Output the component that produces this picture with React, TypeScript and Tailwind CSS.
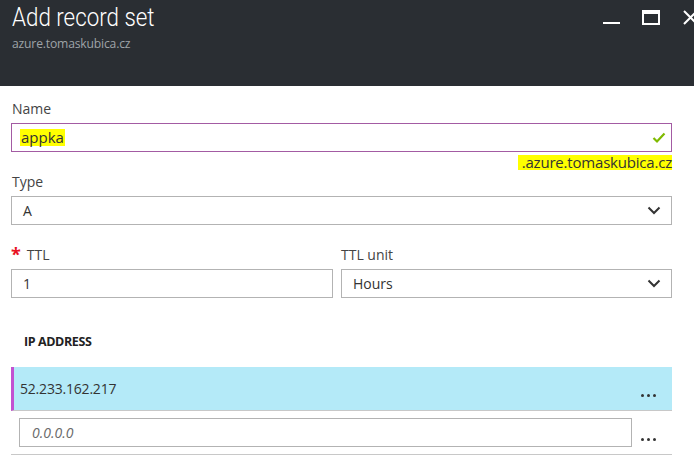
import React from 'react'

const Chevron = () => (
    <svg width="14" height="9" viewBox="0 0 14 9" className="shrink-0">
        <path d="M1.5 1.5 L7 7 L12.5 1.5" fill="none" stroke="#333" strokeWidth="2" />
    </svg>
)

const Dots = () => (
    <div className="flex gap-[3px] items-center">
        <span className="w-[3px] h-[3px] rounded-full bg-[#333]" />
        <span className="w-[3px] h-[3px] rounded-full bg-[#333]" />
        <span className="w-[3px] h-[3px] rounded-full bg-[#333]" />
    </div>
)

export default function App() {
    return (
        <div className="w-[694px] h-[472px] overflow-hidden bg-white font-['Open_Sans','Noto_Sans',sans-serif] text-[#333]">
            <header className="h-[86px] bg-[#2a2e33] flex justify-between pl-3">
                <div>
                    <h1 className="block mt-[2px] origin-left scale-x-[0.86] font-['Roboto',sans-serif] text-[26px] leading-[31px] font-light text-white whitespace-nowrap">Add record set</h1>
                    <p className="mt-[2px] origin-left scale-x-[0.9] text-[13.5px] leading-[16px] text-[#9ea3a8] tracking-[-0.2px] whitespace-nowrap">azure.tomaskubica.cz</p>
                </div>
                <div className="flex items-start gap-[22px] pt-[10px] -mr-[6px]">
                    <svg width="17" height="15" viewBox="0 0 17 15">
                        <rect x="0" y="12" width="17" height="2" fill="#fff" />
                    </svg>
                    <svg width="18" height="15" viewBox="0 0 18 15">
                        <rect x="1" y="1" width="16" height="13" fill="none" stroke="#fff" strokeWidth="2" />
                        <rect x="1" y="1" width="16" height="3" fill="#fff" />
                    </svg>
                    <svg width="18" height="15" viewBox="0 0 18 15">
                        <path d="M2 1 L15 14 M15 1 L2 14" stroke="#fff" strokeWidth="2" />
                    </svg>
                </div>
            </header>

            <main className="pl-[11px] pr-[22px]">
                <label className="block mt-[13px] text-[14px] leading-[20px] text-[#444] pl-[1px]">Name</label>
                <div className="mt-[4px] h-[29px] border border-[#a35ba3] flex items-center justify-between pl-[8px] pr-[5px]">
                    <span className="bg-[#ffff00] text-[15px] leading-[17px] px-[1px] text-[#333]">appka</span>
                    <svg width="14" height="12" viewBox="0 0 14 12">
                        <path d="M1.5 6 L5 9.5 L12.5 1.5" fill="none" stroke="#7fba00" strokeWidth="2.2" />
                    </svg>
                </div>
                <div className="flex justify-end mt-[3px]">
                    <span className="bg-[#ffff00] text-[15px] leading-[15px] h-[15px] pl-[4px] text-[#333] tracking-[-0.2px]">.azure.tomaskubica.cz</span>
                </div>

                <label className="block mt-[2px] text-[14px] leading-[20px] text-[#444] pl-[1px]">Type</label>
                <div className="mt-[4px] h-[29px] border border-[#b3b3b3] flex items-center justify-between pl-[11px] pr-[10px]">
                    <span className="text-[14px]">A</span>
                    <Chevron />
                </div>

                <div className="grid grid-cols-[322px_1fr] gap-[8px] mt-[20px]">
                    <div>
                        <label className="flex items-start gap-[6px] text-[14px] leading-[20px] text-[#444]">
                            <span className="text-[#e81123] text-[18px] leading-[18px] font-bold">*</span>
                            <span>TTL</span>
                        </label>
                        <div className="mt-[4px] h-[29px] border border-[#b3b3b3] flex items-center pl-[11px]">
                            <span className="text-[14px]">1</span>
                        </div>
                    </div>
                    <div>
                        <label className="block text-[14px] leading-[20px] text-[#444]">TTL unit</label>
                        <div className="mt-[4px] h-[29px] border border-[#b3b3b3] flex items-center justify-between pl-[11px] pr-[10px]">
                            <span className="text-[14px]">Hours</span>
                            <Chevron />
                        </div>
                    </div>
                </div>

                <h2 className="mt-[36px] pl-[13px] text-[12.5px] leading-[16px] font-bold text-[#222] tracking-[-0.4px]">IP ADDRESS</h2>

                <div className="mt-[17px] h-[44px] bg-[#b4eaf8] border-l-[3px] border-[#c251d1] border-b border-b-[#c8c8c8] flex items-center justify-between pl-[6px] pr-[16px]">
                    <span className="text-[14px] text-[#333] tracking-[-0.2px]">52.233.162.217</span>
                    <div className="pt-[14px]"><Dots /></div>
                </div>
                <div className="h-[44px] border-b border-[#c8c8c8] flex items-center pl-[8px]">
                    <div className="flex-1 h-[29px] border border-[#b3b3b3] flex items-center pl-[12px]">
                        <span className="text-[14px] italic text-[#6a6a6a]">0.0.0.0</span>
                    </div>
                    <div className="w-[40px] flex justify-start pl-[9px] pt-[14px]"><Dots /></div>
                </div>
            </main>
        </div>
    )
}
